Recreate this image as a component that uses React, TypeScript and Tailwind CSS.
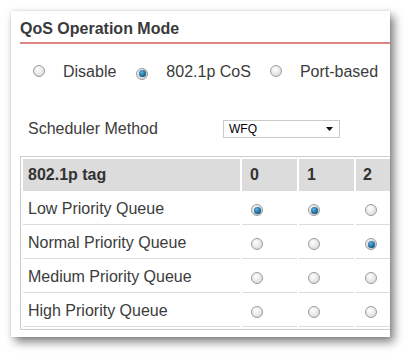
import React from 'react';

const Radio: React.FC<{ checked?: boolean }> = ({ checked = false }) => (
  <span className="inline-flex w-[12px] h-[12px] shrink-0 items-center justify-center rounded-full border border-[#9c9c9c] bg-[radial-gradient(circle_at_40%_35%,#ffffff,#d2d2d2)]">
    {checked && (
      <span className="block w-[7px] h-[7px] rounded-full bg-[radial-gradient(circle_at_40%_35%,#5fb4e6,#0f5a8a_70%,#0a3f63)] shadow-[0_0_1px_rgba(0,0,0,0.6)]" />
    )}
  </span>
);

const QosOperationMode: React.FC = () => {
  const tags = ['0', '1', '2'];
  const queues = [
    { name: 'Low Priority Queue', checked: [0, 1] },
    { name: 'Normal Priority Queue', checked: [2] },
    { name: 'Medium Priority Queue', checked: [] as number[] },
    { name: 'High Priority Queue', checked: [] as number[] },
  ];

  return (
    <div className="w-[379px] h-[326px] bg-white overflow-hidden pl-[9px] pt-[8px] shadow-[4px_5px_9px_rgba(0,0,0,0.5),0_0_3px_rgba(0,0,0,0.12)] text-[#3c3c3c]">
      {/* header */}
      <div className="w-[400px] border-b-2 border-[#dc8585] pb-[3px] text-[16px] leading-[20px] font-bold text-[#3a3a3a]">
        QoS Operation Mode
      </div>

      {/* mode radios */}
      <div className="flex items-center mt-[18px] h-[20px] text-[16px] leading-[20px] whitespace-nowrap">
        <span className="ml-[13px]"><Radio /></span>
        <span className="ml-[18px]">Disable</span>
        <span className="ml-[20px]"><Radio checked /></span>
        <span className="ml-[18px]">802.1p CoS</span>
        <span className="ml-[19px]"><Radio /></span>
        <span className="ml-[18px]">Port-based</span>
      </div>

      {/* scheduler */}
      <div className="flex items-center mt-[37px] h-[20px] text-[16px] leading-[20px]">
        <span className="pl-[8px] w-[203px]">Scheduler Method</span>
        <div className="flex items-center justify-between w-[117px] h-[18px] border border-[#c9c9c9] bg-white pl-[5px] pr-[6px] text-[12px] leading-[16px] text-black">
          <span>WFQ</span>
          <svg width="7" height="4" viewBox="0 0 7 4">
            <path d="M0 0h7L3.5 4z" fill="#111" />
          </svg>
        </div>
      </div>

      {/* mapping table, runs past the card's right edge */}
      <table className="mt-[17px] w-[399px] table-fixed border-separate border-spacing-[2px] border border-[#cdcdcd] text-[16px] leading-[20px]">
        <thead>
          <tr className="h-[32px]">
            <th className="w-[217px] bg-[#dcdcdc] pl-[5px] text-left font-bold text-[#333]">802.1p tag</th>
            <th className="w-[55px] bg-[#dcdcdc] pl-[8px] text-left font-bold text-[#333]">0</th>
            <th className="w-[55px] bg-[#dcdcdc] pl-[8px] text-left font-bold text-[#333]">1</th>
            <th className="w-[60px] bg-[#dcdcdc] pl-[7px] text-left font-bold text-[#333]">2</th>
          </tr>
        </thead>
        <tbody>
          {queues.map((q) => (
            <tr key={q.name} className="h-[32px]">
              <td className="border-b border-[#dcdcdc] pl-[5px] whitespace-nowrap">{q.name}</td>
              {tags.map((t, i) => (
                <td key={t} className="border-b border-[#dcdcdc] pl-[9px] align-middle">
                  <span className="flex pt-[3px]">
                    <Radio checked={q.checked.includes(i)} />
                  </span>
                </td>
              ))}
            </tr>
          ))}
        </tbody>
      </table>
    </div>
  );
};

export default function App() {
  return (
    <div className="w-[409px] h-[356px] bg-white pt-[11px] pl-[11px] font-['Liberation_Sans',Arial,sans-serif]">
      <QosOperationMode />
    </div>
  );
}
